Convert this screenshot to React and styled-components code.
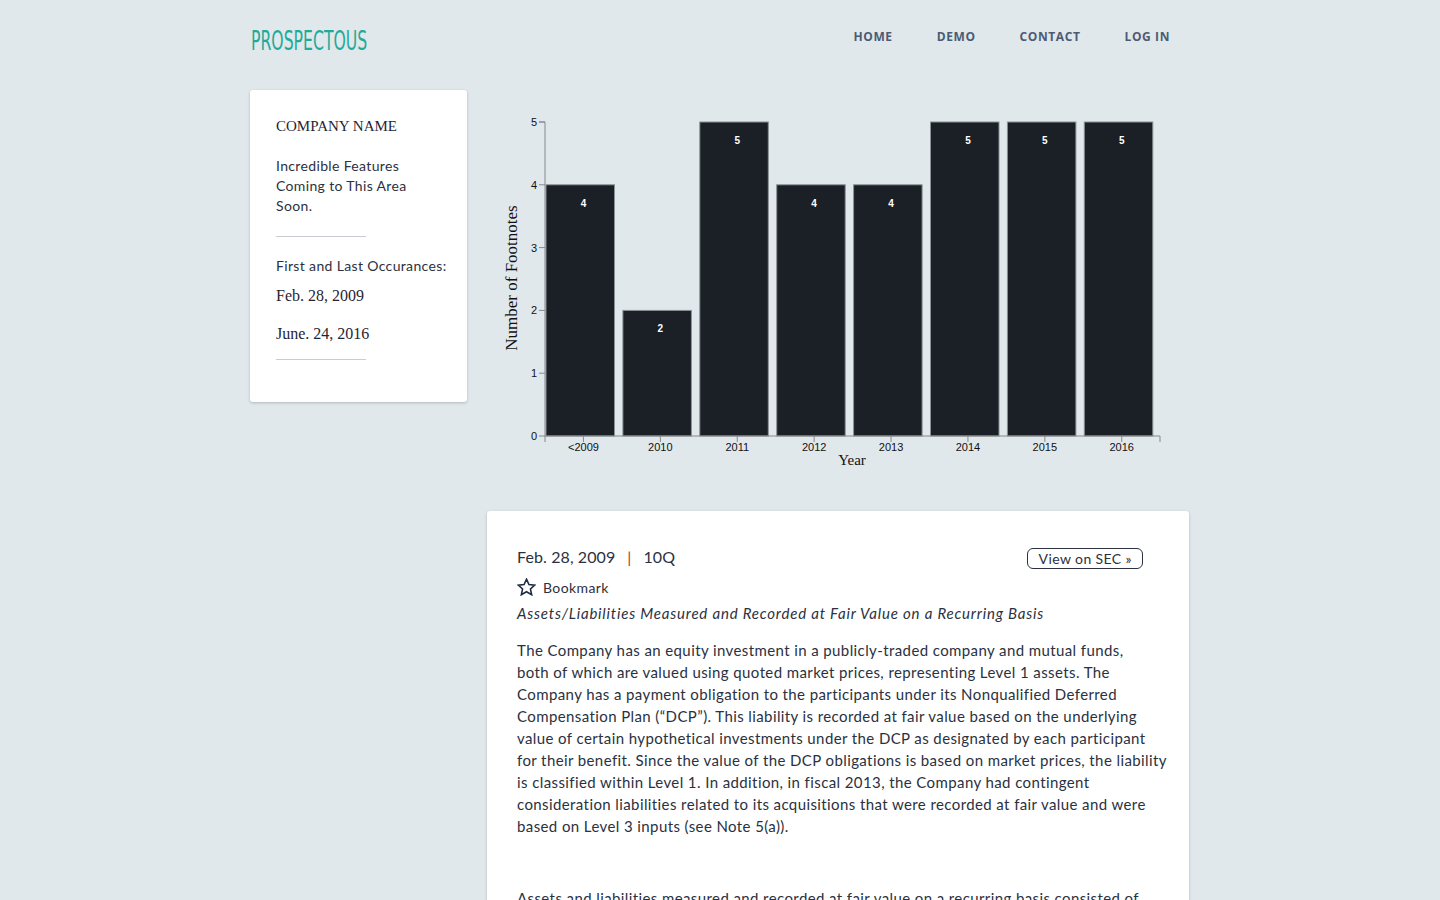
import React from 'react';
import styled, { createGlobalStyle } from 'styled-components';

const GlobalStyle = createGlobalStyle`
  * { box-sizing: border-box; }
  body {
    margin: 0;
    background: #e1e8ec;
    font-family: Lato, "Open Sans", sans-serif;
    color: #2b3140;
  }
`;

const Page = styled.div`
  width: 940px;
  margin: 0 auto;
`;

const Header = styled.header`
  display: flex;
  align-items: center;
  justify-content: space-between;
  height: 86px;
  padding-bottom: 4px;
`;

const Logo = styled.div`
  font-family: "Liberation Sans Narrow", "DejaVu Sans Condensed", "Liberation Sans", sans-serif;
  font-size: 26px;
  color: #1fab9a;
  margin-left: 1px;
  transform: scaleX(0.67);
  transform-origin: left center;
`;

const Nav = styled.nav`
  display: flex;
  gap: 44px;
  margin-right: 20px;
  margin-top: -10px;
`;

const NavLink = styled.a`
  font-family: "Open Sans", sans-serif;
  font-weight: 700;
  font-size: 12px;
  letter-spacing: 0.6px;
  color: #4b5b73;
  text-decoration: none;
`;

const Layout = styled.div`
  display: grid;
  grid-template-columns: 217px 702px;
  column-gap: 20px;
  align-items: start;
`;

const SideCard = styled.aside`
  background: #fff;
  border-radius: 3px;
  box-shadow: 0 1px 3px rgba(0, 0, 0, 0.22);
  padding: 26px 26px 42px;
  margin-top: 4px;
`;

const SerifTitle = styled.div`
  font-family: "Liberation Serif", serif;
  font-size: 15px;
  color: #1f2533;
  line-height: 20px;
`;

const SideText = styled.p`
  margin: ${(p) => p.$mt || 0}px 0 0;
  font-size: 14px;
  line-height: 20px;
  letter-spacing: 0.35px;
  color: #2b3140;
  white-space: ${(p) => (p.$nowrap ? 'nowrap' : 'normal')};
`;

const SideDate = styled.div`
  font-family: "Liberation Serif", serif;
  font-size: 16px;
  color: #1f2533;
  margin-top: ${(p) => p.$mt}px;
`;

const Rule = styled.hr`
  width: 90px;
  margin: ${(p) => p.$mt}px 0 0;
  border: 0;
  border-top: 1px solid #c9cdd2;
`;

const MainCol = styled.div`
  display: flex;
  flex-direction: column;
`;

const ChartWrap = styled.div`
  height: 411px;
  margin-top: 14px;
`;

const Card = styled.article`
  background: #fff;
  border-radius: 3px;
  box-shadow: 0 1px 3px rgba(0, 0, 0, 0.22);
  padding: 33px 30px 60px;
  min-height: 420px;
`;

const CardHead = styled.div`
  display: flex;
  align-items: center;
  justify-content: space-between;
`;

const Meta = styled.div`
  font-size: 16px;
  letter-spacing: 0.1px;
  color: #2b3140;
`;

const Sep = styled.span`
  color: #b3302f;
  margin: 0 12px;
`;

const SecButton = styled.button`
  font-family: Lato, sans-serif;
  font-size: 14px;
  letter-spacing: 0.4px;
  color: #2b3140;
  background: #fff;
  border: 1px solid #2b3140;
  border-radius: 6px;
  padding: 1px 10px 1px 11px;
  margin-right: 16px;
  margin-top: 4px;
`;

const Bookmark = styled.div`
  display: flex;
  align-items: center;
  gap: 7px;
  font-size: 14px;
  letter-spacing: 0.4px;
  margin-top: 9px;
`;

const SubTitle = styled.div`
  font-style: italic;
  font-size: 15px;
  letter-spacing: 0.8px;
  margin-top: 8px;
`;

const Para = styled.p`
  font-size: 15px;
  line-height: 22px;
  letter-spacing: 0.4px;
  margin: ${(p) => p.$mt}px -14px 0 0;
  color: #2b3140;
`;

const bars = [
  { label: '<2009', v: 4 },
  { label: '2010', v: 2 },
  { label: '2011', v: 5 },
  { label: '2012', v: 4 },
  { label: '2013', v: 4 },
  { label: '2014', v: 5 },
  { label: '2015', v: 5 },
  { label: '2016', v: 5 },
];

const X0 = 58;
const Y0 = 336;
const UNIT = 62.8;
const STEP = 76.9;
const BW = 68.5;

function Chart() {
  return (
    <svg width="702" height="411" viewBox="0 0 702 411">
      {bars.map((b, i) => {
        const x = X0 + 1 + i * STEP;
        const cx = X0 + i * STEP + STEP / 2;
        const h = b.v * UNIT;
        return (
          <g key={b.label}>
            <rect x={x} y={Y0 - h} width={BW} height={h} fill="#1b1f26" stroke="#8a9096" strokeWidth="1" />
            <text x={cx} y={Y0 - h + 22} fill="#fff" fontSize="10" fontWeight="700" textAnchor="middle" fontFamily="Liberation Sans, sans-serif">{b.v}</text>
            <line x1={cx} x2={cx} y1={Y0} y2={Y0 + 6} stroke="#888" />
            <text x={cx} y={Y0 + 15} fontSize="11" textAnchor="middle" fill="#111" fontFamily="Liberation Sans, sans-serif">{b.label}</text>
          </g>
        );
      })}
      {[0, 1, 2, 3, 4, 5].map((t) => (
        <g key={t}>
          <line x1={X0 - 6} x2={X0} y1={Y0 - t * UNIT} y2={Y0 - t * UNIT} stroke="#888" />
          <text x={X0 - 8} y={Y0 - t * UNIT + 4} fontSize="11" textAnchor="end" fill="#111" fontFamily="Liberation Sans, sans-serif">{t}</text>
        </g>
      ))}
      <path d={`M${X0 - 6},${Y0 - 5 * UNIT}H${X0}V${Y0}`} fill="none" stroke="#888" />
      <path d={`M${X0},${Y0 + 6}V${Y0}H673V${Y0 + 6}`} fill="none" stroke="#888" />
      <text x="365" y="365" fontSize="15" textAnchor="middle" fill="#111" fontFamily="Liberation Serif, serif">Year</text>
      <text transform="translate(30,178) rotate(-90)" fontSize="17" textAnchor="middle" fill="#111" fontFamily="Liberation Serif, serif">Number of Footnotes</text>
    </svg>
  );
}

function StarIcon() {
  return (
    <svg width="19" height="18" viewBox="0 0 24 23" fill="none" stroke="#1f2a44" strokeWidth="2" strokeLinejoin="miter">
      <path d="M12 1.5l3.1 6.8 7.4.8-5.5 5 1.6 7.3L12 17.6l-6.6 3.8 1.6-7.3-5.5-5 7.4-.8z" />
    </svg>
  );
}

export default function App() {
  return (
    <>
      <GlobalStyle />
      <Page>
        <Header>
          <Logo>PROSPECTOUS</Logo>
          <Nav>
            <NavLink href="#">HOME</NavLink>
            <NavLink href="#">DEMO</NavLink>
            <NavLink href="#">CONTACT</NavLink>
            <NavLink href="#">LOG IN</NavLink>
          </Nav>
        </Header>
        <Layout>
          <SideCard>
            <SerifTitle>COMPANY NAME</SerifTitle>
            <SideText $mt={20}>Incredible Features Coming to This Area Soon.</SideText>
            <Rule $mt={20} />
            <SideText $mt={19} $nowrap>First and Last Occurances:</SideText>
            <SideDate $mt={11}>Feb. 28, 2009</SideDate>
            <SideDate $mt={20}>June. 24, 2016</SideDate>
            <Rule $mt={16} />
          </SideCard>
          <MainCol>
            <ChartWrap>
              <Chart />
            </ChartWrap>
            <Card>
              <CardHead>
                <Meta>Feb. 28, 2009<Sep>|</Sep>10Q</Meta>
                <SecButton>View on SEC »</SecButton>
              </CardHead>
              <Bookmark><StarIcon />Bookmark</Bookmark>
              <SubTitle>Assets/Liabilities Measured and Recorded at Fair Value on a Recurring Basis</SubTitle>
              <Para $mt={17}>
                The Company has an equity investment in a publicly-traded company and mutual funds,<br />
                both of which are valued using quoted market prices, representing Level 1 assets. The<br />
                Company has a payment obligation to the participants under its Nonqualified Deferred<br />
                Compensation Plan (“DCP”). This liability is recorded at fair value based on the underlying<br />
                value of certain hypothetical investments under the DCP as designated by each participant<br />
                for their benefit. Since the value of the DCP obligations is based on market prices, the liability<br />
                is classified within Level 1. In addition, in fiscal 2013, the Company had contingent<br />
                consideration liabilities related to its acquisitions that were recorded at fair value and were<br />
                based on Level 3 inputs (see Note 5(a)).
              </Para>
              <Para $mt={50}>
                Assets and liabilities measured and recorded at fair value on a recurring basis consisted of<br />
                the following types of instruments as of the end of each fiscal period.
              </Para>
            </Card>
          </MainCol>
        </Layout>
      </Page>
    </>
  );
}
